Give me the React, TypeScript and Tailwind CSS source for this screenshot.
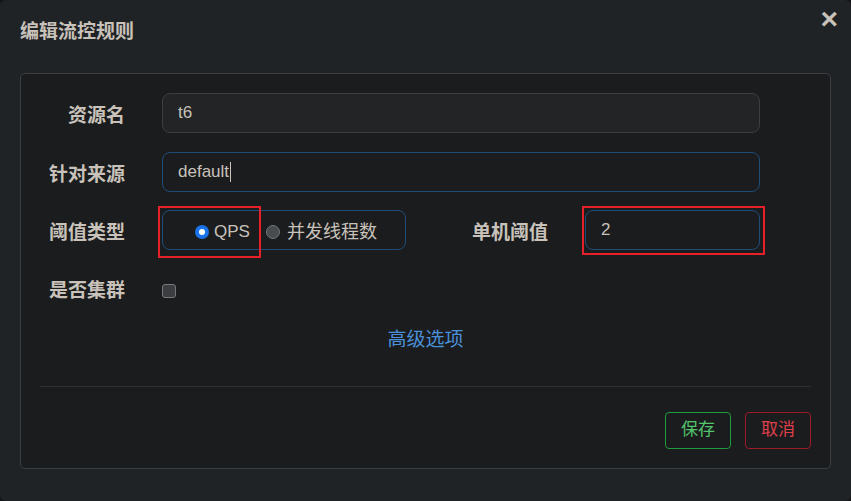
import React from "react"

const cjk = "font-['Liberation_Sans','Noto_Sans_CJK_SC',sans-serif]"

function Label({ children, className = "" }: { children: React.ReactNode; className?: string }) {
  return (
    <div className={`text-right text-[19px] font-bold text-[#c8c2ba] ${className}`}>{children}</div>
  )
}

export default function App() {
  return (
    <div className={`w-[851px] h-[501px] bg-[#131516] ${cjk}`}>
      <div className="relative w-full h-full rounded-[6px] bg-[#202326]">
        <div className="flex items-center justify-between h-[73px] pl-[20px] pr-[13px] pb-[8px]">
          <h1 className="text-[19px] font-bold text-[#c8c2ba]">编辑流控规则</h1>
          <button className="text-[30px] font-bold leading-none text-[#c8c2ba] -mt-[28px]">×</button>
        </div>

        <div className="mx-[20px] h-[396px] rounded-[5px] border border-[#3b3f42] bg-[#1b1c1e] pt-[19px]">
          {/* 资源名 */}
          <div className="flex items-center h-[40px]">
            <Label className="w-[104px] pt-[6px]">资源名</Label>
            <div className="ml-[37px] w-[598px] h-[40px] flex items-center px-[15px] rounded-[8px] border border-[#3c3f42] bg-[#222426] text-[17px] text-[#c8c2ba]">
              t6
            </div>
          </div>

          {/* 针对来源 */}
          <div className="flex items-center h-[40px] mt-[19px]">
            <Label className="w-[104px] pt-[6px]">针对来源</Label>
            <div className="ml-[37px] w-[598px] h-[40px] flex items-center px-[15px] rounded-[8px] border border-[#1f4d78] bg-[#1b1c1e] text-[17px] text-[#c8c2ba]">
              default<span className="ml-[1px] w-px h-[20px] bg-[#c8c2ba]" />
            </div>
          </div>

          {/* 阈值类型 */}
          <div className="flex items-center h-[40px] mt-[18px]">
            <Label className="w-[104px] pt-[6px]">阈值类型</Label>
            <div className="relative ml-[37px] w-[244px] h-[40px] flex items-center pt-[4px] rounded-[8px] border border-[#1f4d78] text-[17px] text-[#c8c2ba]">
              <span className="ml-[32px] w-[14px] h-[14px] rounded-full bg-[#1a73e8] flex items-center justify-center">
                <span className="w-[6px] h-[6px] rounded-full bg-white" />
              </span>
              <span className="ml-[5px]">QPS</span>
              <span className="ml-[16px] w-[14px] h-[14px] rounded-full bg-[#494c4f] border border-[#6e7377]" />
              <span className="ml-[7px] text-[18px]">并发线程数</span>
              <div className="absolute left-[-5px] top-[-5px] w-[103px] h-[52px] border-2 border-[#e8202a]" />
            </div>
            <Label className="w-[142px] pt-[6px]">单机阈值</Label>
            <div className="relative ml-[37px] w-[175px] h-[40px] flex items-center px-[15px] rounded-[8px] border border-[#1f4d78] text-[17px] text-[#c8c2ba]">
              2
              <div className="absolute left-[-4px] top-[-5px] w-[183px] h-[49px] border-2 border-[#e8202a]" />
            </div>
          </div>

          {/* 是否集群 */}
          <div className="flex items-center h-[40px] mt-[21px]">
            <Label className="w-[104px] pt-[1px]">是否集群</Label>
            <span className="ml-[37px] w-[14px] h-[14px] rounded-[3px] bg-[#3b3d40] border border-[#74797d]" />
          </div>

          <div className="mt-[15px] text-center text-[19px] text-[#4a90d9]">高级选项</div>

          <div className="mx-[19px] mt-[31px] h-px bg-[#2e3134]" />

          <div className="flex justify-end gap-[14px] mx-[19px] mt-[25px]">
            <button className="w-[66px] h-[37px] rounded-[4px] border border-[#1f9a3c] text-[17px] text-[#52c46c]">保存</button>
            <button className="w-[66px] h-[37px] rounded-[4px] border border-[#9c1b26] text-[17px] text-[#e0404c]">取消</button>
          </div>
        </div>
      </div>
    </div>
  )
}
